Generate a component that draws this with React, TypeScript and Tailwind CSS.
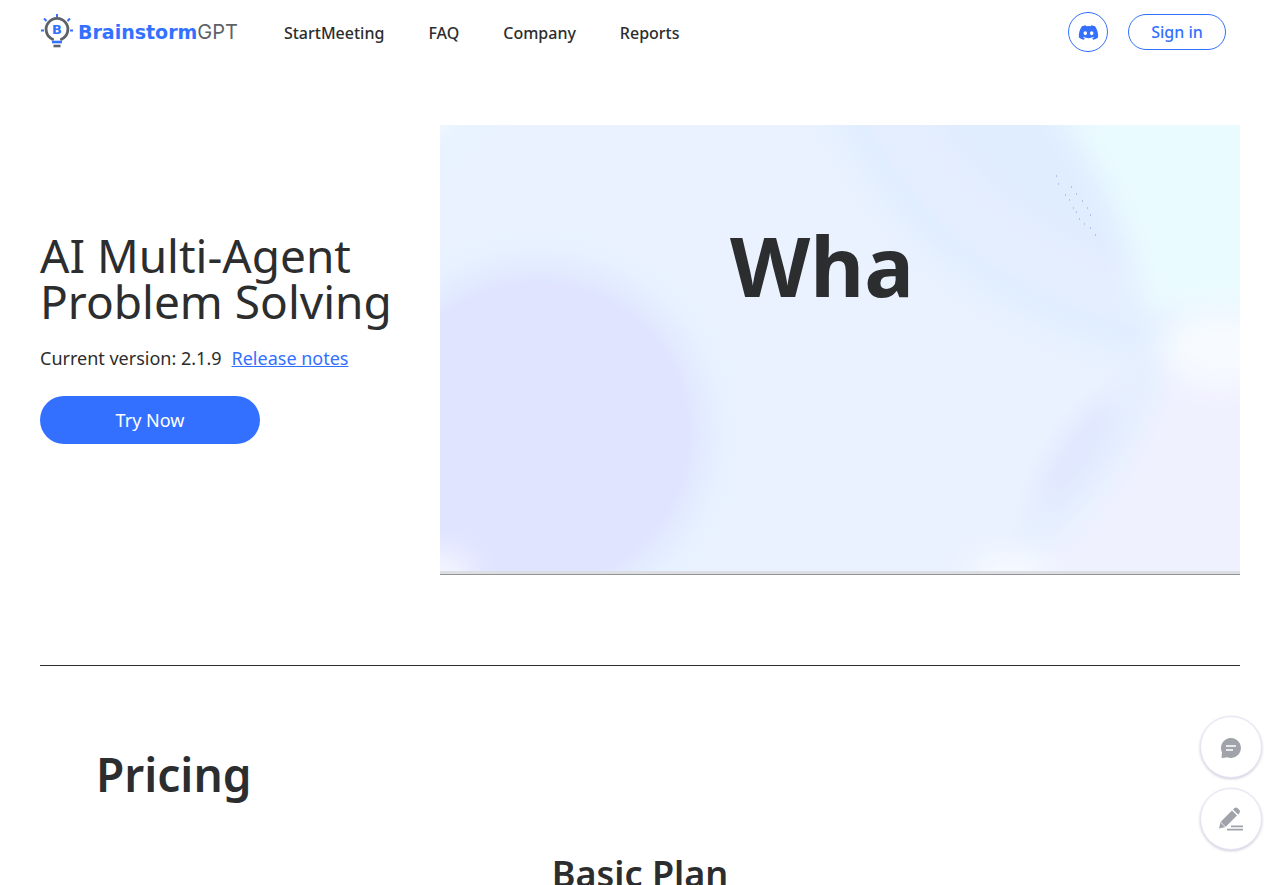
import { FaDiscord } from 'react-icons/fa';

const links = ['StartMeeting', 'FAQ', 'Company', 'Reports'];

const LogoMark = () => (
  <svg width="34" height="36" viewBox="0 0 34 36" fill="none" aria-hidden="true">
    <g stroke="#3370ff" strokeWidth="2">
      <path d="M17 0v3M4 4.500l2.500 2.500M30 4.500l-2.500 2.500M1 16.500h3M30 16.500h3" />
      <path d="M12 28h10" strokeWidth="2.600" />
    </g>
    <path
      d="M12.500 26.500v-1.300A10.900 10.900 0 1 1 21.500 25.200v1.300"
      stroke="#5d6268"
      strokeWidth="2.800"
    />
    <path d="M13.500 32h7" stroke="#5d6268" strokeWidth="2.600" />
    <text
      x="17"
      y="20"
      textAnchor="middle"
      fontSize="13"
      className="fill-[#3370ff] font-['DejaVu_Sans',sans-serif] font-bold">
      B
    </text>
  </svg>
);

const ChatIcon = () => (
  <svg width="22" height="22" viewBox="0 0 22 22" aria-hidden="true">
    <path d="M11 2a10 10 0 1 1-4 19.200Q4.500 22 1.500 22L2 16.500A10 10 0 0 1 11 2z" fill="#a0a4aa" />
    <path d="M6 10h10M6 14h7" stroke="#fff" strokeWidth="1.600" />
  </svg>
);

const PencilIcon = () => (
  <svg width="26" height="26" viewBox="0 0 26 26" fill="#a0a4aa" aria-hidden="true">
    <path d="M1 22.500l1.500-6.500L14 4.500l5 5L7.500 21z" />
    <path d="M15 3.500l1.500-1.500q1.500-1.200 3 0l2 2q1.200 1.500 0 3L20 8.500z" />
    <path d="M2.500 16l5 5" stroke="#fff" strokeWidth="0.800" />
    <path d="M13 19.500h12v1.700H13zM9 22.800h16v1.700H9z" />
  </svg>
);

const HeroArt = () => (
  <svg
    className="block size-full"
    viewBox="0 0 800 446"
    preserveAspectRatio="none"
    aria-hidden="true">
    <defs>
      <radialGradient id="violet">
        <stop offset="0.68" stopColor="#e0e4ff" />
        <stop offset="0.76" stopColor="#e3ecff" />
        <stop offset="0.86" stopColor="#e7f1ff" />
        <stop offset="1" stopColor="#ebf2ff" />
      </radialGradient>
      <radialGradient id="ring">
        <stop offset="0.68" stopColor="#e0edff" />
        <stop offset="0.76" stopColor="#e5eeff" />
        <stop offset="0.84" stopColor="#e4eeff" />
        <stop offset="0.87" stopColor="#e0eeff" />
        <stop offset="0.92" stopColor="#e6f0ff" />
        <stop offset="1" stopColor="#ebf2ff" />
      </radialGradient>
      <filter id="soft" x="-50%" y="-50%" width="200%" height="200%">
        <feGaussianBlur stdDeviation="14" />
      </filter>
    </defs>
    <rect width="800" height="446" fill="#ebf2ff" />
    <path d="M-20 -20H70L-20 80z" fill="#e7f3ff" filter="url(#soft)" />
    <path d="M-30 -25H20L-20 20z" fill="#fbfaff" filter="url(#soft)" />
    <circle cx="769" cy="-176" r="450" fill="url(#ring)" />
    <circle cx="97" cy="309" r="220" fill="url(#violet)" />
    <path
      d="M820 235H715C700 335 650 400 560 480H820z"
      fill="#f0f1ff"
      filter="url(#soft)"
    />
    <path
      d="M720 200C700 300 650 370 580 415"
      fill="none"
      stroke="#e5efff"
      strokeWidth="34"
      filter="url(#soft)"
    />
    <path d="M610 -20C660 40 690 100 705 190H830V-20z" fill="#eafbff" filter="url(#soft)" />
    <ellipse cx="780" cy="222" rx="60" ry="38" fill="#f7fbff" filter="url(#soft)" />
    <ellipse
      cx="637"
      cy="328"
      rx="18"
      ry="70"
      fill="#dfe6ff"
      transform="rotate(34 637 328)"
      filter="url(#soft)"
    />
    <ellipse cx="570" cy="446" rx="38" ry="18" fill="#f7faff" filter="url(#soft)" />
    <ellipse cx="0" cy="446" rx="34" ry="20" fill="#f4f5ff" filter="url(#soft)" />
    <path
      d="M616 51h1M618 59h1M631 62h1M625 70h1M636 69h1M629 75h1M642 76h1M633 83h1M647 83h1M636 87h1M650 90h1M639 94h1M644 99h1M650 103h1M655 110h1"
      stroke="#8094e0"
    />
  </svg>
);

const Header = () => (
  <header className="flex h-16 items-center justify-between pr-[54px] pl-10">
    <div className="flex items-center gap-[46px]">
      <a href="#home" className="flex items-center gap-1" aria-label="BrainstormGPT">
        <LogoMark />
        <span className="flex items-baseline leading-8">
          <span className="font-['DejaVu_Sans',sans-serif] text-[19px] font-bold text-[#3370ff]">
            Brainstorm
          </span>
          <span className="font-['Inter',sans-serif] text-xl text-[#5d6268]">GPT</span>
        </span>
      </a>
      <nav className="flex gap-11 pt-[2px] text-base font-medium">
        {links.map((link) => (
          <a key={link} href={`#${link}`}>
            {link}
          </a>
        ))}
      </nav>
    </div>
    <div className="flex items-center gap-5 text-[#3370ff]">
      <a
        href="#discord"
        aria-label="Discord"
        className="flex size-10 items-center justify-center rounded-full border border-[#3370ff]">
        <FaDiscord size={21} />
      </a>
      <button className="h-9 w-[98px] rounded-full border border-[#3370ff] text-base font-medium">
        Sign in
      </button>
    </div>
  </header>
);

const Hero = () => (
  <section className="mx-10 flex items-center border-b border-[#2c2d2e] pt-[61px] pb-[90px]">
    <div className="flex w-[400px] shrink-0 flex-col items-start pb-6">
      <h1 className="text-[46px] leading-[46px] whitespace-nowrap">
        AI Multi-Agent
        <br />
        Problem Solving
      </h1>
      <p className="mt-[18px] flex gap-[10px] text-lg leading-8 whitespace-nowrap">
        <span>Current version: 2.1.9</span>
        <a href="#release" className="text-[#3370ff] underline">
          Release notes
        </a>
      </p>
      <button className="mt-[22px] h-12 w-[220px] rounded-full bg-[#3370ff] text-lg text-white">
        Try Now
      </button>
    </div>
    <div className="relative aspect-[16/9] flex-1 border-b border-[#929394]">
      <div className="size-full border-b-[3px] border-[#dcdee3]">
        <HeroArt />
      </div>
      <p className="absolute top-[82px] left-[290px] text-[83px] leading-[116px] font-bold">
        Wha
      </p>
    </div>
  </section>
);

const Pricing = () => (
  <section className="px-24 pt-[72px]">
    <h2 className="text-[46px] leading-[72px] font-semibold">Pricing</h2>
    <h3 className="mt-[36px] text-center text-[36px] leading-[56px] font-semibold">
      Basic Plan
    </h3>
  </section>
);

const floatStyle =
  'flex size-[62px] items-center justify-center rounded-full border border-[#e3e5f5] bg-white shadow-[0_1px_3px_#c9cad6]';

const App = () => (
  <div className="h-screen overflow-x-hidden overflow-y-auto bg-white font-['Noto_Sans',sans-serif] text-[#2c2d2e]">
    <Header />
    <main>
      <Hero />
      <Pricing />
    </main>
    <div className="fixed right-[18px] bottom-[35px] flex flex-col gap-[10px]">
      <button aria-label="Chat" className={floatStyle}>
        <ChatIcon />
      </button>
      <button aria-label="Feedback" className={floatStyle}>
        <PencilIcon />
      </button>
    </div>
  </div>
);

export default App;
